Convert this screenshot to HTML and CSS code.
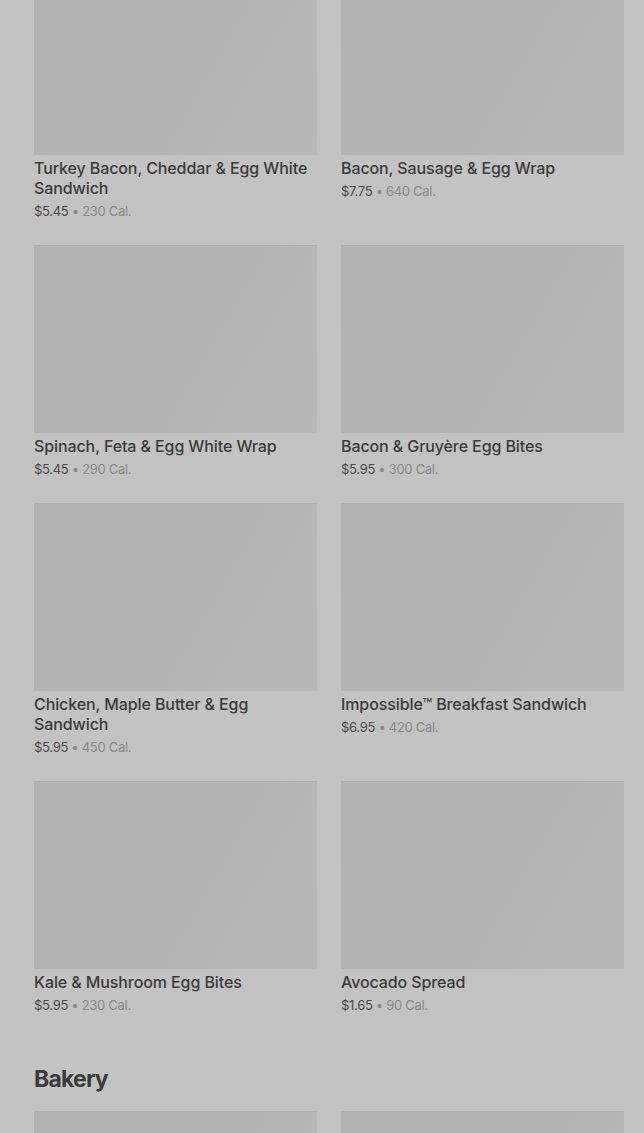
FILE: index.html
```html
<!DOCTYPE html>
<html lang="en">
<head>
  <meta charset="UTF-8">
  <title>Menu</title>
  <link rel="stylesheet" href="styles.css">
</head>
<body>
  <main class="menu">
    <section class="category">
      <div class="grid">
        <div class="item">
          <div class="thumb"></div>
          <h3 class="name">Turkey Bacon, Cheddar &amp; Egg White Sandwich</h3>
          <p class="meta"><span class="price">$5.45</span> • 230 Cal.</p>
        </div>
        <div class="item">
          <div class="thumb"></div>
          <h3 class="name">Bacon, Sausage &amp; Egg Wrap</h3>
          <p class="meta"><span class="price">$7.75</span> • 640 Cal.</p>
        </div>
        <div class="item">
          <div class="thumb"></div>
          <h3 class="name">Spinach, Feta &amp; Egg White Wrap</h3>
          <p class="meta"><span class="price">$5.45</span> • 290 Cal.</p>
        </div>
        <div class="item">
          <div class="thumb"></div>
          <h3 class="name">Bacon &amp; Gruyère Egg Bites</h3>
          <p class="meta"><span class="price">$5.95</span> • 300 Cal.</p>
        </div>
        <div class="item">
          <div class="thumb"></div>
          <h3 class="name">Chicken, Maple Butter &amp; Egg Sandwich</h3>
          <p class="meta"><span class="price">$5.95</span> • 450 Cal.</p>
        </div>
        <div class="item">
          <div class="thumb"></div>
          <h3 class="name">Impossible™ Breakfast Sandwich</h3>
          <p class="meta"><span class="price">$6.95</span> • 420 Cal.</p>
        </div>
        <div class="item">
          <div class="thumb"></div>
          <h3 class="name">Kale &amp; Mushroom Egg Bites</h3>
          <p class="meta"><span class="price">$5.95</span> • 230 Cal.</p>
        </div>
        <div class="item">
          <div class="thumb"></div>
          <h3 class="name">Avocado Spread</h3>
          <p class="meta"><span class="price">$1.65</span> • 90 Cal.</p>
        </div>
      </div>
    </section>

    <section class="category">
      <h2 class="category-title">Bakery</h2>
      <div class="grid">
        <div class="item">
          <div class="thumb"></div>
        </div>
        <div class="item">
          <div class="thumb"></div>
        </div>
      </div>
    </section>
  </main>
</body>
</html>
```

FILE: styles.css
```css
body {
  margin: 0;
  padding: 0;
  background-color: #c3c3c3;
  font-family: Inter, "Noto Sans", sans-serif;
  color: #3a3a3a;
  overflow: hidden;
}

/* page is scrolled a bit: first row of pictures is cut at the top */
.menu {
  margin-top: -33px;
  padding: 0 20px 0 34px;
}

.grid {
  display: grid;
  grid-template-columns: 283px 283px;
  column-gap: 24px;
}

.item {
  margin-bottom: 24px;
}

.thumb {
  height: 188px;
  background: linear-gradient(120deg, #b3b3b3 0%, #b4b4b4 60%, #b8b8b8 80%, #b9b9b9 100%);
  border-top: 1px solid #afafaf;
  box-sizing: border-box;
}

.name {
  margin: 3px 0 0;
  font-size: 16px;
  font-weight: 500;
  line-height: 20px;
  letter-spacing: -0.1px;
  color: #3b3b3b;
}

.meta {
  margin: 3px 0 0;
  font-size: 13px;
  line-height: 20px;
  letter-spacing: -0.3px;
  color: #888;
}

.price {
  color: #4a4a4a;
}

.category-title {
  margin: 25px 0 17px;
  font-size: 23px;
  font-weight: 700;
  line-height: 30px;
  letter-spacing: -0.8px;
  color: #3a3a3a;
}
```
